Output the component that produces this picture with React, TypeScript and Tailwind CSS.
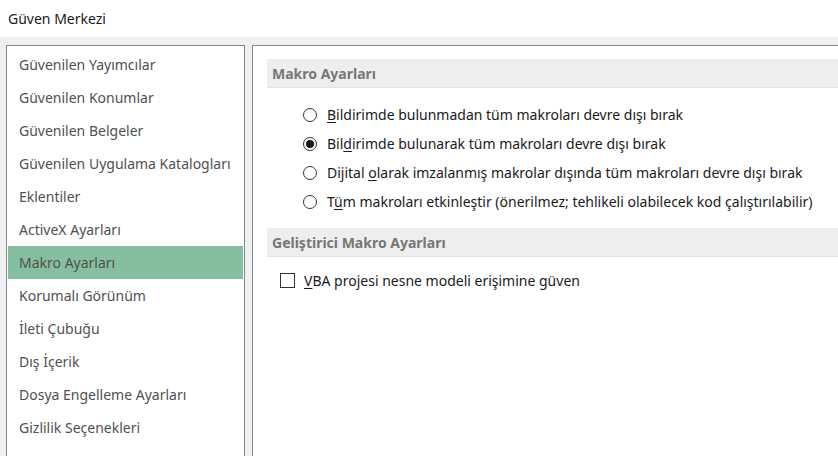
import React from "react";

const leftItems = [
  "Güvenilen Yayımcılar",
  "Güvenilen Konumlar",
  "Güvenilen Belgeler",
  "Güvenilen Uygulama Katalogları",
  "Eklentiler",
  "ActiveX Ayarları",
  "Makro Ayarları",
  "Korumalı Görünüm",
  "İleti Çubuğu",
  "Dış İçerik",
  "Dosya Engelleme Ayarları",
  "Gizlilik Seçenekleri",
];

function Radio({ checked }: { checked?: boolean }) {
  return (
    <span className="w-[14px] h-[14px] rounded-full border border-[#333333] bg-white flex items-center justify-center shrink-0">
      {checked && <span className="w-[8px] h-[8px] rounded-full bg-[#1a1a1a]" />}
    </span>
  );
}

function U({ children }: { children: React.ReactNode }) {
  return <span className="underline underline-offset-2">{children}</span>;
}

export default function App() {
  const font = { fontFamily: '"Noto Sans", "Open Sans", sans-serif' };
  return (
    <div
      className="w-[838px] h-[456px] overflow-hidden bg-[#f0f0f0] flex flex-col text-[14px]"
      style={font}
    >
      <div className="h-[37px] bg-white flex items-center pl-[8px] text-[#1a1a1a] shrink-0">
        Güven Merkezi
      </div>
      <div className="flex pl-[6px] pt-[8px] gap-[7px] flex-1 min-h-0">
        <div className="w-[239px] h-[440px] border border-[#828790] bg-white pt-[2px] px-[1px] shrink-0">
          {leftItems.map((t) => (
            <div
              key={t}
              className={
                "h-[33px] flex items-center pl-[11px] text-[#505050] " +
                (t === "Makro Ayarları" ? "bg-[#86bf9f]" : "")
              }
            >
              {t}
            </div>
          ))}
        </div>
        <div className="flex-1 h-[440px] border-t border-l border-[#828790] bg-white pl-[14px] pt-[13px] min-w-0 -mr-[20px]">
          <div className="h-[29px] bg-[#eeeeee] border-b border-[#e2e2e2] flex items-center pl-[5px] font-bold text-[#777777]">
            Makro Ayarları
          </div>
          <div className="flex flex-col pt-[12px] pl-[36px] text-[#1a1a1a]">
            <div className="h-[29px] flex items-center gap-[10px]">
              <Radio />
              <span className="whitespace-nowrap">
                <U>B</U>ildirimde bulunmadan tüm makroları devre dışı bırak
              </span>
            </div>
            <div className="h-[29px] flex items-center gap-[10px]">
              <Radio checked />
              <span className="whitespace-nowrap">
                Bil<U>d</U>irimde bulunarak tüm makroları devre dışı bırak
              </span>
            </div>
            <div className="h-[29px] flex items-center gap-[10px]">
              <Radio />
              <span className="whitespace-nowrap">
                Dijital <U>o</U>larak imzalanmış makrolar dışında tüm makroları devre dışı bırak
              </span>
            </div>
            <div className="h-[29px] flex items-center gap-[10px]">
              <Radio />
              <span className="whitespace-nowrap">
                T<U>ü</U>m makroları etkinleştir (önerilmez; tehlikeli olabilecek kod çalıştırılabilir)
              </span>
            </div>
          </div>
          <div className="mt-[12px] h-[29px] bg-[#eeeeee] border-b border-[#e2e2e2] flex items-center pl-[5px] font-bold text-[#777777]">
            Geliştirici Makro Ayarları
          </div>
          <div className="flex items-center gap-[9px] pl-[13px] pt-[13px] text-[#1a1a1a]">
            <span className="w-[15px] h-[15px] border border-[#333333] bg-white shrink-0" />
            <span className="whitespace-nowrap">
              <U>V</U>BA projesi nesne modeli erişimine güven
            </span>
          </div>
        </div>
      </div>
    </div>
  );
}
